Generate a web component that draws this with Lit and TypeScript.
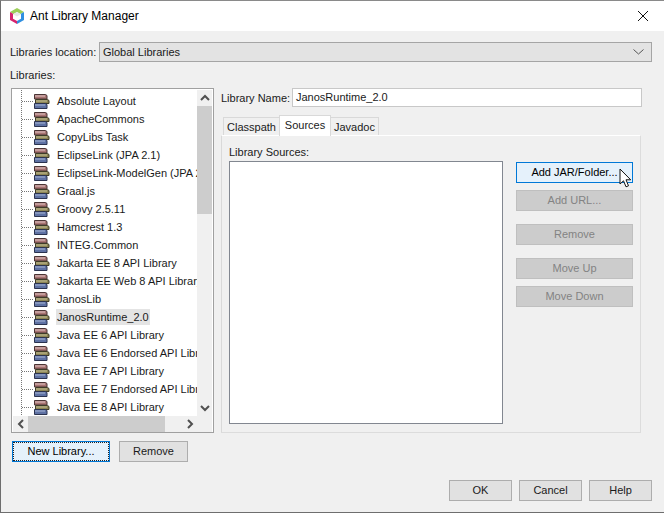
import { LitElement, html, css, svg } from 'lit';
import { customElement } from 'lit/decorators.js';

const libraries = [
  'Absolute Layout',
  'ApacheCommons',
  'CopyLibs Task',
  'EclipseLink (JPA 2.1)',
  'EclipseLink-ModelGen (JPA 2.1)',
  'Graal.js',
  'Groovy 2.5.11',
  'Hamcrest 1.3',
  'INTEG.Common',
  'Jakarta EE 8 API Library',
  'Jakarta EE Web 8 API Library',
  'JanosLib',
  'JanosRuntime_2.0',
  'Java EE 6 API Library',
  'Java EE 6 Endorsed API Library',
  'Java EE 7 API Library',
  'Java EE 7 Endorsed API Library',
  'Java EE 8 API Library',
];

const books = svg`<svg class="books" width="17" height="15" viewBox="0 0 17 15">
  <path d="M1.500 .5h11l1.500 1v3.500h-12.500z" fill="#a87472" stroke="#4a3434"/>
  <path d="M2 2h10" stroke="#e0c4c4"/>
  <path d="M2.500 5.500h12l1.500 1v3h-13.500z" fill="#8c8454" stroke="#3e3c28"/>
  <path d="M3 7h11" stroke="#c4bf96"/>
  <path d="M1.500 9.500h11l1.500 1v4h-12.500z" fill="#5f72a4" stroke="#2b3350"/>
  <path d="M2 11h10" stroke="#a9b6d6"/>
</svg>`;

@customElement('app-root')
export class AppRoot extends LitElement {
  static styles = css`
    :host {
      display: block;
      width: 664px;
      height: 513px;
      overflow: hidden;
      font-family: 'Liberation Sans', Arial, sans-serif;
      font-size: 11px;
      color: #1a1a1a;
    }

    .window {
      position: relative;
      box-sizing: border-box;
      height: 513px;
      display: flex;
      flex-direction: column;
      background: #f0f0f0;
      border: 1px solid #6e6e6e;
      border-top-color: #8a8a8a;
      border-right: none;
    }

    .title {
      height: 30px;
      flex: none;
      display: flex;
      align-items: center;
      background: #fff;
      padding: 0 15px 0 8px;
      font-size: 12px;
      color: #000;
    }
    .title span {
      margin-left: 5px;
      flex: 1;
    }

    .body {
      flex: 1;
      display: flex;
      flex-direction: column;
      padding: 11px 12px 11px 9px;
    }

    .location {
      display: flex;
      align-items: center;
      height: 20px;
      gap: 5px;
    }
    .location > span {
      width: 84px;
      white-space: nowrap;
    }
    .combo {
      flex: 1;
      box-sizing: border-box;
      height: 20px;
      display: flex;
      align-items: center;
      justify-content: space-between;
      padding: 0 7px 0 3px;
      background: #e3e3e3;
      border: 1px solid #a5a5a5;
    }

    .libs-label {
      margin-top: 5px;
      height: 20px;
      line-height: 16px;
    }

    .main {
      display: flex;
      margin-top: 1px;
      gap: 7px;
    }

    .left {
      width: 203px;
      flex: none;
      margin-left: 1px;
    }
    .tree {
      box-sizing: border-box;
      height: 345px;
      padding: 1px;
      background: #fff;
      border: 1px solid #a0a0a0;
      display: grid;
      grid-template-columns: 184px 15px;
      grid-template-rows: 326px 16px;
    }
    .rows {
      overflow: hidden;
      padding-top: 2px;
      background-image: linear-gradient(#777 50%, transparent 50%);
      background-size: 1px 2px;
      background-repeat: repeat-y;
      background-position: 8px 0;
    }
    .row {
      height: 18px;
      display: flex;
      align-items: center;
      white-space: nowrap;
      padding-left: 9px;
    }
    .row i {
      flex: none;
      width: 11px;
      height: 1px;
      background-image: linear-gradient(90deg, #777 50%, transparent 50%);
      background-size: 2px 1px;
    }
    .books {
      flex: none;
      margin-right: 7px;
    }
    .name {
      line-height: 16px;
      height: 16px;
    }
    .name.selected {
      background: #e4e4e4;
      margin-left: -1px;
      padding: 0 1px;
    }

    .vbar {
      display: flex;
      flex-direction: column;
      background: #f0f0f0;
    }
    .hbar {
      display: flex;
      background: #f0f0f0;
    }
    .arrow {
      flex: none;
      width: 15px;
      height: 16px;
      display: flex;
      align-items: center;
      justify-content: center;
    }
    .vthumb {
      width: 15px;
      height: 108px;
      background: #cdcdcd;
    }
    .vtrack {
      flex: 1;
    }
    .hthumb {
      width: 137px;
      height: 16px;
      background: #cdcdcd;
    }
    .hbar .track {
      flex: 1;
    }
    .corner {
      background: #f0f0f0;
    }

    .left-actions {
      display: flex;
      gap: 9px;
      margin: 8px 0 0 1px;
    }

    .btn {
      box-sizing: border-box;
      height: 21px;
      padding-bottom: 2px;
      display: flex;
      align-items: center;
      justify-content: center;
      background: #e1e1e1;
      border: 1px solid #adadad;
      color: #1a1a1a;
    }
    .btn.focus {
      border-color: #0078d7;
      background: #e5f1fb;
      color: #000;
    }
    .btn.off {
      background: #cccccc;
      border-color: #bfbfbf;
      color: #838383;
    }
    .new {
      width: 98px;
      position: relative;
    }
    .new::after {
      content: '';
      position: absolute;
      inset: 0;
      border: 1px dotted #222;
    }
    .remove {
      width: 69px;
    }

    .right {
      flex: 1;
      display: flex;
      flex-direction: column;
    }
    .name-row {
      display: flex;
      align-items: center;
      height: 19px;
      gap: 5px;
      padding-right: 10px;
    }
    .name-row > span {
      width: 66px;
      white-space: nowrap;
    }
    .input {
      flex: 1;
      box-sizing: border-box;
      height: 19px;
      line-height: 17px;
      padding-left: 3px;
      background: #fff;
      border: 1px solid #c8c8c8;
    }

    .tabs {
      display: flex;
      align-items: flex-end;
      height: 20px;
      margin: 8px 0 0 2px;
    }
    .tab {
      box-sizing: border-box;
      height: 18px;
      line-height: 18px;
      text-align: center;
      background: #f0f0f0;
      border: 1px solid #d9d9d9;
      border-bottom: none;
      margin-right: -1px;
    }
    .tab.active {
      line-height: 18px;
      background: #fff;
      position: relative;
      margin-bottom: -1px;
      height: 21px;
    }

    .panel {
      box-sizing: border-box;
      width: 420px;
      height: 298px;
      display: flex;
      flex-direction: column;
      padding: 8px 7px;
      border: 1px solid #d9d9d9;
      border-top-color: #fff;
      border-right-color: #dcdcdc;
      border-bottom-color: #dcdcdc;
    }
    .panel-label {
      height: 17px;
      line-height: 16px;
    }
    .panel-main {
      display: flex;
      gap: 13px;
      flex: 1;
    }
    .sources {
      box-sizing: border-box;
      width: 274px;
      height: 263px;
      background: #fff;
      border: 1px solid #828790;
    }
    .actions {
      position: relative;
      display: flex;
      flex-direction: column;
      width: 117px;
      margin-top: 1px;
    }
    .gap-s {
      margin-top: 7px;
    }
    .gap-l {
      margin-top: 13px;
    }
    .cursor {
      position: absolute;
      left: 103px;
      top: 6px;
    }

    .footer {
      display: flex;
      justify-content: flex-end;
      gap: 7px;
      margin-top: auto;
    }
    .footer .btn {
      width: 63px;
    }
  `;

  private chevron(points: string) {
    return html`<svg width="10" height="10" viewBox="0 0 10 10">
      <polyline points=${points} fill="none" stroke="#505050" stroke-width="2"></polyline>
    </svg>`;
  }

  render() {
    return html`
      <div class="window">
        <div class="title">
          <svg width="16" height="18" viewBox="0 0 16 18">
            <path d="M8 1l7 4-7 4-7-4z" fill="#9ccf5a" />
            <path d="M15 5v8l-7 4V9z" fill="#2f8fe0" />
            <path d="M1 5v8l7 4V9z" fill="#d6246e" />
            <path d="M8 5l4 2.200v4.600L8 14l-4-2.200V7.200z" fill="#fff" />
            <path d="M8 5l4 2.200L8 9.500 4 7.200z" fill="#e8e8e8" />
          </svg>
          <span>Ant Library Manager</span>
          <svg width="12" height="12" viewBox="0 0 12 12">
            <path d="M1 1l10 10M11 1L1 11" stroke="#111" stroke-width="1" />
          </svg>
        </div>
        <div class="body">
          <div class="location">
            <span>Libraries location:</span>
            <div class="combo">
              <span>Global Libraries</span>
              <svg width="11" height="6" viewBox="0 0 11 6">
                <polyline points="0.5,0.5 5.5,5 10.5,0.5" fill="none" stroke="#555"></polyline>
              </svg>
            </div>
          </div>
          <div class="libs-label">Libraries:</div>
          <div class="main">
            <div class="left">
              <div class="tree">
                <div class="rows">
                  ${libraries.map(
                    (name) => html`<div class="row">
                      <i></i>${books}
                      <span class="name ${name === 'JanosRuntime_2.0' ? 'selected' : ''}">${name}</span>
                    </div>`,
                  )}
                </div>
                <div class="vbar">
                  <div class="arrow">${this.chevron('1,7 5,3 9,7')}</div>
                  <div class="vthumb"></div>
                  <div class="vtrack"></div>
                  <div class="arrow">${this.chevron('1,3 5,7 9,3')}</div>
                </div>
                <div class="hbar">
                  <div class="arrow">${this.chevron('7,1 3,5 7,9')}</div>
                  <div class="hthumb"></div>
                  <div class="track"></div>
                  <div class="arrow">${this.chevron('3,1 7,5 3,9')}</div>
                </div>
                <div class="corner"></div>
              </div>
              <div class="left-actions">
                <div class="btn focus new">New Library...</div>
                <div class="btn remove">Remove</div>
              </div>
            </div>
            <div class="right">
              <div class="name-row">
                <span>Library Name:</span>
                <div class="input">JanosRuntime_2.0</div>
              </div>
              <div class="tabs">
                <div class="tab" style="width: 57px">Classpath</div>
                <div class="tab active" style="width: 52px">Sources</div>
                <div class="tab" style="width: 49px">Javadoc</div>
              </div>
              <div class="panel">
                <div class="panel-label">Library Sources:</div>
                <div class="panel-main">
                  <div class="sources"></div>
                  <div class="actions">
                    <div class="btn focus">Add JAR/Folder...</div>
                    <div class="btn off gap-s">Add URL...</div>
                    <div class="btn off gap-l">Remove</div>
                    <div class="btn off gap-l">Move Up</div>
                    <div class="btn off gap-s">Move Down</div>
                    <svg class="cursor" width="13" height="20" viewBox="0 0 13 20">
                      <path d="M1 1v15l3.500-3.200 2.500 6 2.500-1-2.500-6h4.700z" fill="#fff" stroke="#111" stroke-width="1" />
                    </svg>
                  </div>
                </div>
              </div>
            </div>
          </div>
          <div class="footer">
            <div class="btn">OK</div>
            <div class="btn">Cancel</div>
            <div class="btn">Help</div>
          </div>
        </div>
      </div>
    `;
  }
}
